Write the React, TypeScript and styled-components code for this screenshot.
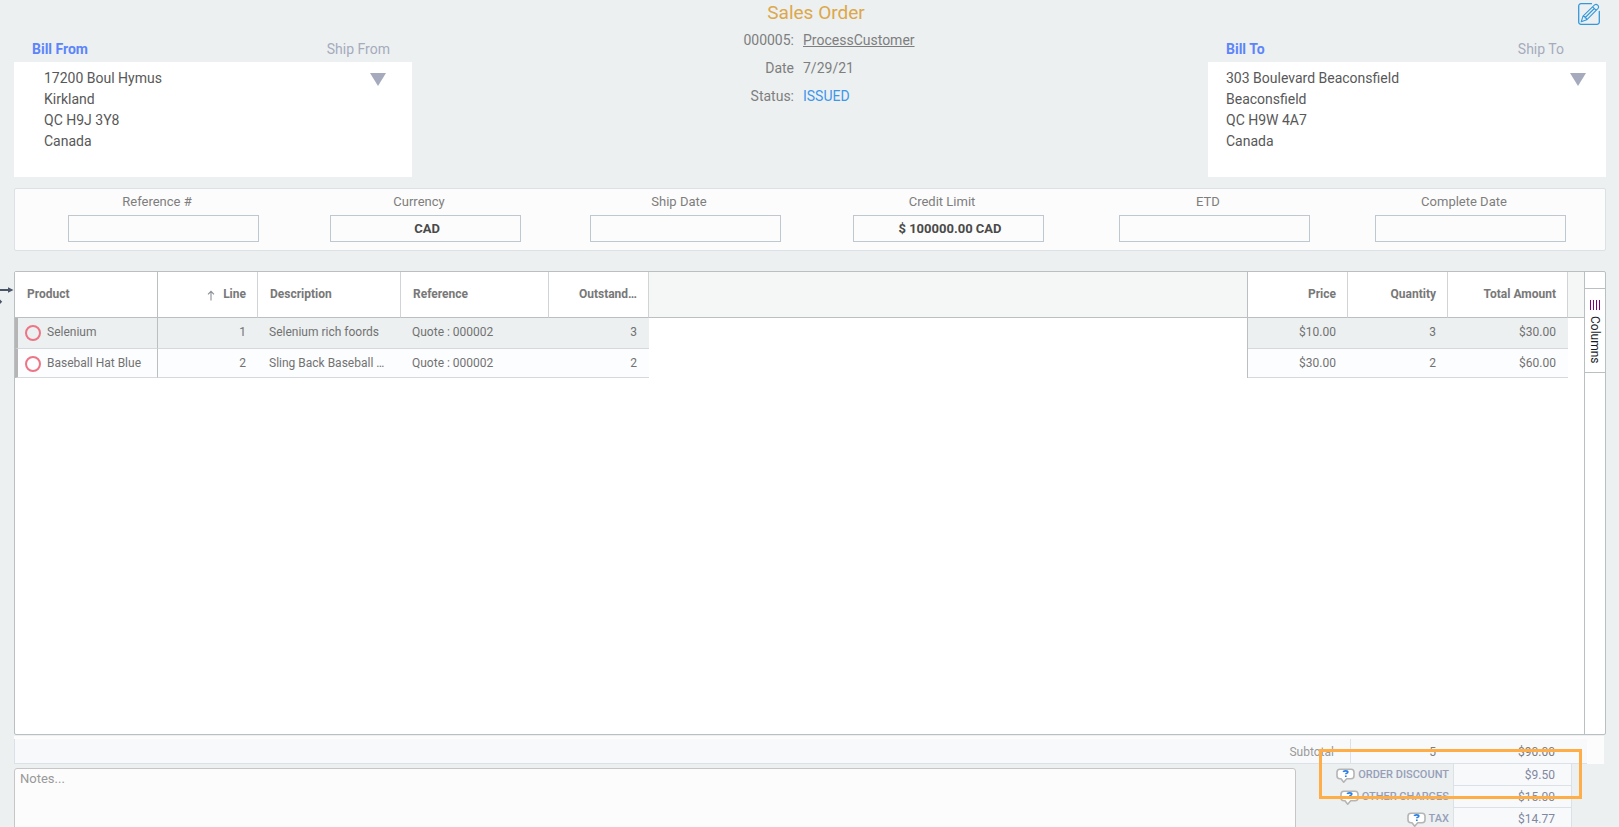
import React from "react";
import styled, { createGlobalStyle } from "styled-components";

const GlobalStyle = createGlobalStyle`
  *, *::before, *::after { box-sizing: border-box; }
  html, body { margin: 0; height: 100%; overflow: hidden; background: #ecf0f1; }
  body { font-family: Roboto, "Liberation Sans", sans-serif; font-size: 14px; color: #7e7e7e; }
  button, input, textarea { font-family: inherit; margin: 0; }
`;

const Shell = styled.main`
  position: relative;
  display: flex;
  flex-direction: column;
  height: 100vh;
  overflow: hidden;
  padding: 0 13px 0 14px;
`;

const Header = styled.header`
  display: grid;
  grid-template-columns: 1fr 2fr 1fr;
  height: 177px;
  flex: none;
`;

const Party = styled.section`
  display: flex;
  flex-direction: column;
  min-width: 0;
`;

const ToolRow = styled.div`
  display: flex;
  justify-content: flex-end;
  height: 36px;
  padding: 3px 6px 0 0;
`;

const IconButton = styled.button`
  display: flex;
  align-items: flex-start;
  height: 22px;
  padding: 0;
  border: 0;
  background: none;
  cursor: pointer;
`;

const Tabs = styled.div<{ $right: number }>`
  display: flex;
  justify-content: space-between;
  align-items: center;
  height: 26px;
  padding: 0 ${(p) => p.$right}px 0 18px;
`;

const Tab = styled.button<{ $active?: boolean }>`
  padding: 0;
  border: 0;
  background: none;
  font-size: 14px;
  line-height: 20px;
  font-weight: ${(p) => (p.$active ? 700 : 400)};
  color: ${(p) => (p.$active ? "#5c85fb" : "#a5abbd")};
  cursor: pointer;
`;

const AddressCard = styled.div<{ $left: number; $right: number }>`
  display: flex;
  justify-content: space-between;
  flex: 1;
  padding: 6px ${(p) => p.$right}px 0 ${(p) => p.$left}px;
  background: #fff;
  color: #585858;
`;

const Address = styled.address`
  font-style: normal;
  font-size: 14px;
  line-height: 21px;
`;

const Caret = styled.button`
  display: flex;
  height: 13px;
  margin-top: 5px;
  padding: 0;
  border: 0;
  background: none;
  cursor: pointer;
`;

const Summary = styled.section`
  display: flex;
  flex-direction: column;
  align-items: stretch;
`;

const Title = styled.h1`
  margin: 0;
  padding-left: 12px;
  text-align: center;
  font-size: 19px;
  line-height: 26px;
  font-weight: 400;
  color: #dda74a;
`;

const Meta = styled.dl`
  display: grid;
  grid-template-columns: 1fr 1fr;
  column-gap: 9px;
  grid-auto-rows: 28px;
  align-items: center;
  margin: 0 23px 0 0;
  font-size: 14px;
`;

const MetaLabel = styled.dt`
  text-align: right;
`;

const MetaValue = styled.dd<{ $status?: boolean }>`
  margin: 0;
  color: ${(p) => (p.$status ? "#3d96ea" : "inherit")};
`;

const CustomerLink = styled.a`
  color: inherit;
  text-decoration: underline;
`;

const Fields = styled.form`
  display: grid;
  grid-template-columns: 262fr 260fr 263fr 266fr 256fr 191fr;
  flex: none;
  height: 63px;
  margin-top: 11px;
  padding: 4px 39px 0 53px;
  border: 1px solid #dce1e6;
  border-radius: 2px;
  background: #fcfcfc;
`;

const Field = styled.label`
  display: flex;
  flex-direction: column;
  width: 191px;
  font-size: 13px;
  line-height: 18px;
`;

const FieldName = styled.span`
  padding-right: 13px;
  text-align: center;
`;

const FieldInput = styled.input`
  width: 100%;
  height: 27px;
  margin-top: 4px;
  padding: 0 0 0 3px;
  border: 1px solid #bdc8d0;
  border-radius: 0;
  background: #fcfcfc;
  text-align: center;
  font-size: 13px;
  font-weight: 700;
  color: #4a4a4a;
  outline: none;
`;

const GridPanel = styled.section`
  display: flex;
  flex: 1;
  min-height: 0;
  margin-top: 20px;
  border: 1px solid #babfc2;
  border-radius: 2px;
  background: #fff;
`;

const GridBody = styled.div`
  flex: 1;
  min-width: 0;
`;

const Table = styled.table`
  width: 100%;
  table-layout: fixed;
  border-collapse: separate;
  border-spacing: 0;
  font-size: 12px;
`;

const Col = styled.col<{ $w?: number }>`
  width: ${(p) => (p.$w ? `${p.$w}px` : "auto")};
`;

type CellProps = { $right?: boolean; $pinned?: boolean };

const HeadCell = styled.th<CellProps>`
  height: 46px;
  padding: 0 11px 2px 12px;
  border-bottom: 1px solid #babfc2;
  border-right: 1px solid ${(p) => (p.$pinned ? "#babfc2" : "#d0d4d7")};
  background: #fff;
  text-align: ${(p) => (p.$right ? "right" : "left")};
  font-weight: 700;
  white-space: nowrap;
  overflow: hidden;
  color: #787878;
`;

const HeadGap = styled.td<{ $pinned?: boolean }>`
  border-bottom: 1px solid #babfc2;
  border-right: ${(p) => (p.$pinned ? "1px solid #babfc2" : "0")};
  background: #f5f7f7;
`;

const SortArrow = styled.svg`
  margin-right: 8px;
  vertical-align: -3px;
`;

const Row = styled.tr<{ $first?: boolean }>`
  height: ${(p) => (p.$first ? 31 : 29)}px;
  --row: ${(p) => (p.$first ? "#ecf0f1" : "#fcfdfe")};
  --lift: ${(p) => (p.$first ? "2px" : "0")};
`;

const Cell = styled.td<CellProps>`
  padding: 0 12px var(--lift) 11px;
  border-bottom: 1px solid #d5d9dc;
  background: var(--row);
  text-align: ${(p) => (p.$right ? "right" : "left")};
  white-space: nowrap;
  overflow: hidden;
  color: #727272;
`;

const ProductCell = styled(Cell)`
  padding-left: 7px;
  border-left: 3px solid #b5b5b5;
  border-right: 1px solid #babfc2;
`;

const Product = styled.span`
  display: flex;
  align-items: center;
  gap: 6px;
`;

const StateRing = styled.i`
  width: 16px;
  height: 16px;
  margin-top: 2px;
  border: 2px solid #ec7586;
  border-radius: 50%;
`;

const BodyGap = styled.td<{ $pinned?: boolean }>`
  padding: 0;
  border-right: ${(p) => (p.$pinned ? "1px solid #babfc2" : "0")};
`;

const SideBar = styled.aside`
  width: 21px;
  padding-top: 16px;
  border-left: 1px solid #babfc2;
`;

const SideButton = styled.button`
  display: flex;
  flex-direction: column;
  align-items: center;
  gap: 6px;
  width: 100%;
  height: 85px;
  padding: 11px 0 0;
  border: solid #babfc2;
  border-width: 1px 0;
  background: #fff;
  color: #181d1f;
  font-size: 12px;
  cursor: pointer;
`;

const SideLabel = styled.span`
  writing-mode: vertical-rl;
  line-height: 14px;
`;

const Subtotal = styled.section`
  display: flex;
  flex: none;
  height: 28px;
  margin: 1px 2px 0 0;
  padding: 3px 17px 0 0;
  background: #fcfcfd;
`;

const SubtotalBar = styled.div`
  display: grid;
  grid-template-columns: 1fr 104px 133px;
  flex: 1;
  align-items: stretch;
  line-height: 26px;
  border-left: 1px solid #dce1e8;
  border-bottom: 1px solid #dce1e8;
  background: #f8f9fb;
  text-align: right;
  font-size: 12px;
`;

const SubtotalLabel = styled.span`
  height: 24px;
  padding-right: 16px;
  color: #999;
`;

const SubtotalValue = styled.output<{ $ruled?: boolean }>`
  height: 24px;
  padding-right: ${(p) => (p.$ruled ? 18 : 32)}px;
  border-left: ${(p) => (p.$ruled ? "1px solid #dce1e8" : "0")};
`;

const Footer = styled.section`
  display: flex;
  justify-content: space-between;
  flex: 0 0 63px;
  padding-right: 34px;
  overflow: hidden;
`;

const Notes = styled.textarea`
  flex: 1;
  height: 120px;
  margin: 4px 24px 0 0;
  padding: 2px 5px;
  border: 1px solid #c6c6c6;
  border-radius: 3px;
  background: #fcfcfc;
  font-size: 13px;
  line-height: 15px;
  resize: none;
  outline: none;
  &::placeholder { color: #999; opacity: 1; }
`;

const Charges = styled.dl`
  display: grid;
  grid-template-columns: 133px 119px;
  grid-auto-rows: 22px;
  margin: 0;
`;

const ChargeLabel = styled.dt`
  display: flex;
  justify-content: flex-end;
  align-items: center;
  gap: 3px;
  padding-right: 4px;
  font-size: 11px;
  line-height: 20px;
  font-weight: 500;
  white-space: nowrap;
  color: #979fb8;
`;

const ChargeValue = styled.dd`
  margin: 0;
  padding-right: 16px;
  border: solid #dce1e8;
  border-width: 0 1px 1px;
  background: #f8f9fb;
  text-align: right;
  font-size: 12px;
  line-height: 23px;
  color: #8088a0;
`;

const Highlight = styled.div`
  position: absolute;
  right: 37px;
  bottom: 28px;
  width: 263px;
  height: 50px;
  border: 3px solid #ffad46;
  pointer-events: none;
`;

const EdgeArrow = styled.svg`
  position: absolute;
  left: 0;
  top: 284px;
`;

const EditIcon = () => (
  <svg width="22" height="22" viewBox="0 0 22 22" fill="none" stroke="#3498db" strokeLinecap="round" strokeLinejoin="round">
    <path strokeWidth="1.3" d="M13.5 .7H3A2.3 2.3 0 0 0 .7 3v16A2.3 2.3 0 0 0 3 21.3h16a2.3 2.3 0 0 0 2.3-2.3V8.5" />
    <path strokeWidth="1.1" d="M3.2 18.8 5 13.2 16.6 1.9Q18.2.7 19.7 2.2T20.1 5.3L8.7 16.8ZM5 13.2l1.8.3.4 1.5 1.2.3.3 1.5M14.7 3.8l3.5 3.5M7.3 14.5l9-9" />
  </svg>
);

const CaretIcon = () => (
  <svg width="16" height="13" viewBox="0 0 16 13"><path d="M0 0h16L8 13z" fill="#a5abbd" /></svg>
);

const HelpIcon = () => (
  <svg width="19" height="16" viewBox="0 0 19 16">
    <path d="M4 2.2h11a3 3 0 0 1 3 3v3.6a3 3 0 0 1-3 3h-4.3L7.7 15.2 5 11.8H4a3 3 0 0 1-3-3V5.2a3 3 0 0 1 3-3z" fill="#fff" stroke="#b5b5b5" strokeWidth="1.6" strokeLinejoin="round" />
    <path d="M7.2 4.9q.4-1.1 2.4-1.1 2.2 0 2.2 1.3 0 .8-1.1 1.2-.9.3-.9 1M9.8 8.4v1.6" fill="none" stroke="#2a7fe0" strokeWidth="1.7" />
  </svg>
);

const fields = [
  { name: "Reference #", value: "" },
  { name: "Currency", value: "CAD" },
  { name: "Ship Date", value: "" },
  { name: "Credit Limit", value: "$ 100000.00 CAD" },
  { name: "ETD", value: "" },
  { name: "Complete Date", value: "" },
];

const columnWidths = [143, 100, 143, 148, 100, undefined, 100, 100, 120, 16];

const rows = [
  { product: "Selenium", line: 1, description: "Selenium rich foords", reference: "Quote : 000002", outstanding: 3, price: "$10.00", quantity: 3, total: "$30.00" },
  { product: "Baseball Hat Blue", line: 2, description: "Sling Back Baseball …", reference: "Quote : 000002", outstanding: 2, price: "$30.00", quantity: 2, total: "$60.00" },
];

const charges = [
  { name: "ORDER DISCOUNT", value: "$9.50" },
  { name: "OTHER CHARGES", value: "$15.00" },
  { name: "TAX", value: "$14.77" },
];

export default function App() {
  return (
    <>
      <GlobalStyle />
      <Shell>
        <Header>
          <Party>
            <ToolRow />
            <Tabs $right={22}>
              <Tab $active>Bill From</Tab>
              <Tab>Ship From</Tab>
            </Tabs>
            <AddressCard $left={30} $right={26}>
              <Address>17200 Boul Hymus<br />Kirkland<br />QC H9J 3Y8<br />Canada</Address>
              <Caret aria-label="Choose billing origin"><CaretIcon /></Caret>
            </AddressCard>
          </Party>
          <Summary>
            <Title>Sales Order</Title>
            <Meta>
              <MetaLabel>000005:</MetaLabel>
              <MetaValue><CustomerLink href="#customer">ProcessCustomer</CustomerLink></MetaValue>
              <MetaLabel>Date</MetaLabel>
              <MetaValue>7/29/21</MetaValue>
              <MetaLabel>Status:</MetaLabel>
              <MetaValue $status>ISSUED</MetaValue>
            </Meta>
          </Summary>
          <Party>
            <ToolRow>
              <IconButton aria-label="Edit order"><EditIcon /></IconButton>
            </ToolRow>
            <Tabs $right={42}>
              <Tab $active>Bill To</Tab>
              <Tab>Ship To</Tab>
            </Tabs>
            <AddressCard $left={18} $right={20}>
              <Address>303 Boulevard Beaconsfield<br />Beaconsfield<br />QC H9W 4A7<br />Canada</Address>
              <Caret aria-label="Choose billing address"><CaretIcon /></Caret>
            </AddressCard>
          </Party>
        </Header>

        <Fields>
          {fields.map((f) => (
            <Field key={f.name}>
              <FieldName>{f.name}</FieldName>
              <FieldInput type="text" defaultValue={f.value} />
            </Field>
          ))}
        </Fields>

        <GridPanel>
          <GridBody>
            <Table>
              <colgroup>
                {columnWidths.map((w, i) => <Col key={i} $w={w} />)}
              </colgroup>
              <thead>
                <tr>
                  <HeadCell $pinned>Product</HeadCell>
                  <HeadCell $right>
                    <SortArrow width="8" height="11" viewBox="0 0 8 11" fill="none" stroke="#8a8f94" strokeWidth="1.1">
                      <path d="M4 10.5V1.5M1 4.3 4 1.3l3 3" />
                    </SortArrow>
                    Line
                  </HeadCell>
                  <HeadCell>Description</HeadCell>
                  <HeadCell>Reference</HeadCell>
                  <HeadCell $right>Outstand…</HeadCell>
                  <HeadGap $pinned />
                  <HeadCell $right>Price</HeadCell>
                  <HeadCell $right>Quantity</HeadCell>
                  <HeadCell $right>Total Amount</HeadCell>
                  <HeadGap />
                </tr>
              </thead>
              <tbody>
                {rows.map((r, i) => (
                  <Row key={r.line} $first={i === 0}>
                    <ProductCell><Product><StateRing />{r.product}</Product></ProductCell>
                    <Cell $right>{r.line}</Cell>
                    <Cell>{r.description}</Cell>
                    <Cell>{r.reference}</Cell>
                    <Cell $right>{r.outstanding}</Cell>
                    <BodyGap $pinned />
                    <Cell $right>{r.price}</Cell>
                    <Cell $right>{r.quantity}</Cell>
                    <Cell $right>{r.total}</Cell>
                    <BodyGap />
                  </Row>
                ))}
              </tbody>
            </Table>
          </GridBody>
          <SideBar>
            <SideButton>
              <svg width="10" height="10" viewBox="0 0 10 10" stroke="#800080"><path d="M.5 0v10M3.5 0v10M6.5 0v10M9.5 0v10" /></svg>
              <SideLabel>Columns</SideLabel>
            </SideButton>
          </SideBar>
        </GridPanel>

        <Subtotal>
          <SubtotalBar>
            <SubtotalLabel>Subtotal</SubtotalLabel>
            <SubtotalValue $ruled>5</SubtotalValue>
            <SubtotalValue>$90.00</SubtotalValue>
          </SubtotalBar>
        </Subtotal>

        <Footer>
          <Notes aria-label="Notes" placeholder="Notes..." />
          <Charges>
            {charges.map((c) => (
              <React.Fragment key={c.name}>
                <ChargeLabel><HelpIcon />{c.name}</ChargeLabel>
                <ChargeValue>{c.value}</ChargeValue>
              </React.Fragment>
            ))}
          </Charges>
        </Footer>

        <Highlight />
        <EdgeArrow width="14" height="22" viewBox="0 0 14 22">
          <path d="M0 6h9" stroke="#4a5568" strokeWidth="2" />
          <path d="M8 3.2 13.5 6 8 8.8zM0 15.5l2.2 2.2L0 20z" fill="#4a5568" />
        </EdgeArrow>
      </Shell>
    </>
  );
}
